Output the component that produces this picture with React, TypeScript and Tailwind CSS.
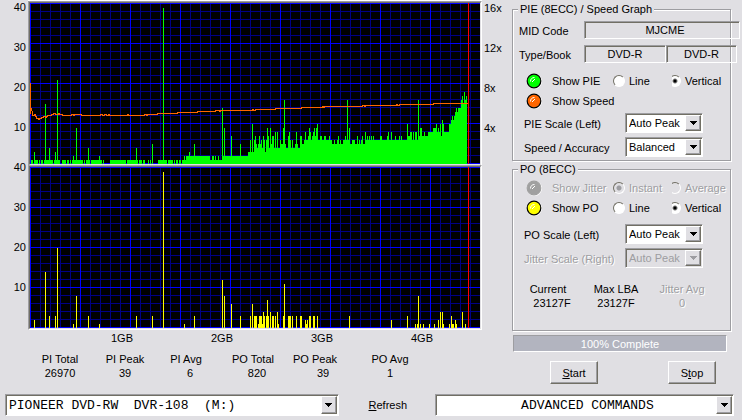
import type { ReactNode } from "react";

type Run = [start: number, end: number, value: number];
type Point = [x: number, y: number];

// [first column, last column, errors]
const pieBase: Run[] = [
  [1, 2, 1], [4, 7, 1], [9, 9, 1], [11, 12, 1], [14, 22, 1], [24, 29, 1], [32, 35, 1],
  [37, 38, 1], [40, 40, 1], [42, 52, 1], [54, 54, 1], [56, 59, 1], [61, 71, 1], [73, 73, 1],
  [80, 95, 1], [97, 107, 1], [109, 111, 1], [113, 114, 1], [118, 118, 1], [120, 120, 1],
  [122, 122, 1], [128, 136, 1], [138, 142, 1], [144, 144, 1], [146, 147, 1], [149, 150, 1],
  [152, 155, 1], [156, 179, 2], [180, 191, 1], [182, 183, 2], [185, 185, 2], [188, 188, 2],
  [192, 217, 2],
];

const piePeaks: Point[] = [
  [4, 3], [15, 15], [19, 4], [25, 3], [27, 21], [43, 2], [46, 9], [58, 4], [69, 2], [106, 4],
  [122, 5], [133, 39], [154, 2], [159, 3], [164, 5], [192, 14], [194, 9], [201, 7], [210, 5],
];

// one value for each column from 218 on
const pieTail = [
  3, 3, 6, 3, 10, 3, 6, 7, 5, 4, 5, 7, 5, 6, 4, 7, 6, 3, 6, 9, 7, 4, 9, 5, 7, 7, 4, 8, 4, 8, 4, 4,
  6, 5, 5, 9, 16, 5, 4, 4, 7, 8, 6, 4, 6, 4, 4, 5, 8, 5, 4, 4, 7, 7, 5, 5, 6, 8, 6, 6, 7, 9,
  8, 6, 7, 8, 9, 7, 9, 10, 6, 6, 7, 7, 6, 6, 7, 7, 6, 6, 6, 7, 6, 6, 5, 5, 6, 5, 5, 6, 7, 5,
  6, 5, 5, 6, 6, 7, 6, 16, 6, 9, 5, 5, 6, 6, 6, 5, 5, 7, 5, 6, 5, 6, 7, 5, 5, 8, 6, 7, 6, 7,
  6, 7, 6, 7, 6, 6, 6, 6, 6, 6, 7, 7, 6, 6, 6, 6, 6, 7, 8, 6, 6, 8, 6, 6, 6, 7, 6, 6, 6, 7,
  6, 7, 6, 6, 6, 6, 6, 10, 7, 7, 8, 8, 6, 8, 6, 8, 8, 6, 16, 7, 9, 9, 7, 7, 8, 7, 7, 7, 8, 8,
  8, 8, 8, 9, 9, 9, 10, 8, 9, 8, 10, 7, 11, 10, 8, 8, 8, 8, 8, 10, 10, 11, 12, 11, 12, 13, 14,
  13, 14, 14, 14, 16, 17, 15, 18, 16, 17,
];

const pieBars: Run[] = [
  ...pieBase,
  ...piePeaks.map(([x, value]): Run => [x, x, value]),
  ...pieTail.map((value, index): Run => [218 + index, 218 + index, value]),
];

const poBars: Run[] = [
  [4, 4, 2], [15, 15, 14], [19, 19, 3], [25, 25, 3], [27, 27, 20], [43, 43, 1], [46, 46, 8],
  [58, 58, 3], [69, 69, 1], [106, 106, 3], [122, 122, 3], [133, 133, 39], [154, 154, 1],
  [164, 164, 3], [192, 192, 12], [194, 194, 8], [201, 201, 6], [210, 210, 3], [220, 220, 3],
  [222, 222, 6], [224, 226, 3], [228, 228, 1], [229, 231, 3], [232, 232, 1], [233, 233, 4],
  [234, 234, 3], [236, 236, 3], [237, 237, 7], [238, 238, 3], [240, 240, 4], [242, 243, 3],
  [245, 245, 3], [247, 247, 4], [248, 248, 1], [253, 253, 3], [254, 254, 11], [258, 260, 3],
  [262, 262, 3], [266, 266, 3], [270, 271, 3], [275, 275, 2], [276, 276, 1], [277, 277, 2],
  [279, 280, 3], [283, 284, 3], [287, 287, 3], [319, 319, 3], [361, 361, 2], [377, 377, 3],
  [385, 385, 1], [387, 387, 1], [388, 388, 8], [390, 390, 1], [393, 393, 1], [399, 399, 1],
  [404, 404, 1], [408, 408, 2], [410, 410, 4], [412, 412, 4], [413, 413, 1], [419, 419, 1],
  [421, 421, 3], [422, 423, 1], [425, 425, 2], [426, 426, 1], [432, 432, 4], [435, 435, 1],
];

const speedLine =
  "M0 79V110M1 104V107M2 107V112H4V111H5V113H6V115H8V116H9V115H11V114H13V113H15V114H16V113H17V112H21V111H23V110H25V111H28V110H29V111H32V112H41V111H43V112H44V111H51V112H70V111H72V112H74V111H76V112H78V111H79V112H97V111H98V112H114V111H116V112H117V111H127V110H147V109H167V108H185V107H189V108H190V107H222V106H223V107H225V106H245V105H271V104H292V103H293V104H294V103H332V102H334V103H335V102H366V101H367V102H369V101H403V100H437";

const columns = Array.from({ length: 45 }, (_, index) => index * 10);
const rows = Array.from({ length: 21 }, (_, index) => index * 8);
const isMajor = (index: number) => index % 5 === 0;

function Grid() {
  return (
    <>
      {[false, true].map((major) => (
        <g key={String(major)} fill={major ? "#0000ff" : "#000084"}>
          {columns.map((x, index) =>
            isMajor(index) === major ? <rect key={`x${x}`} x={x} width="1" height="161" /> : null,
          )}
          {rows.map((y, index) =>
            isMajor(index) === major ? <rect key={`y${y}`} y={y} width="450" height="1" /> : null,
          )}
        </g>
      ))}
    </>
  );
}

function Graph({ label, bars, fill, children }: { label: string; bars: Run[]; fill: string; children?: ReactNode }) {
  return (
    <svg
      role="img"
      aria-label={label}
      viewBox="0 0 450 161"
      preserveAspectRatio="none"
      shapeRendering="crispEdges"
      className="block h-[161px] w-full bg-black"
    >
      <Grid />
      <g fill={fill}>
        {bars.map(([start, end, value]) => (
          <rect key={`${start}-${value}`} x={start} y={161 - value * 4} width={end - start + 1} height={value * 4} />
        ))}
      </g>
      {children}
      <rect x="438" width="1" height="161" fill="#ff0000" />
    </svg>
  );
}

function Led({ color, disabled }: { color: string; disabled?: boolean }) {
  return (
    <svg viewBox="0 0 16 16" className="size-4 shrink-0" aria-hidden="true">
      <circle cx="8.5" cy="8.5" r="7.5" fill="#ffffff" />
      <circle cx="8" cy="8" r="6.8" fill={color} stroke={disabled ? "#a0a0a0" : "#000000"} strokeWidth="1.2" />
      <path d="M4.5 8.5C4.5 6 6 4.5 8.5 4.5M6 9L9 6" fill="none" stroke="#ffffff" strokeWidth="1" />
    </svg>
  );
}

const disabledText = "text-[#9d9da1] [text-shadow:1px_1px_0_#ffffff]";

function Toggle({ color, disabled, children }: { color: string; disabled?: boolean; children: ReactNode }) {
  return (
    <button
      type="button"
      disabled={disabled}
      className={`flex items-center gap-[10px] whitespace-nowrap text-left ${disabled ? disabledText : ""}`}
    >
      <Led color={color} disabled={disabled} />
      {children}
    </button>
  );
}

function Radio({
  name,
  label,
  checked,
  disabled,
  clipped,
}: {
  name: string;
  label: string;
  checked?: boolean;
  disabled?: boolean;
  clipped?: boolean;
}) {
  return (
    <label className={`flex items-center gap-1 ${disabled ? disabledText : ""}`}>
      <span className={`flex justify-end overflow-hidden ${clipped ? "w-[9px]" : "w-3"}`}>
        <input
          type="radio"
          name={name}
          defaultChecked={checked}
          disabled={disabled}
          className="size-3 shrink-0 appearance-none rounded-full border border-t-[#716f64] border-r-white border-b-white border-l-[#716f64] bg-white checked:bg-[radial-gradient(circle,#000000_1px,#ffffff_3px)] disabled:bg-[#e0dfe3] disabled:checked:bg-[radial-gradient(circle,#9d9da1_2px,#e0dfe3_3px)]"
        />
      </span>
      {label}
    </label>
  );
}

function Arrow({ disabled }: { disabled?: boolean }) {
  return (
    <span className="pointer-events-none flex w-4 shrink-0 items-center justify-center border border-t-white border-r-[#716f64] border-b-[#716f64] border-l-white bg-[#e0dfe3] shadow-[inset_-1px_-1px_0_#9d9da1]">
      <svg viewBox="0 0 7 4" className="h-1 w-[7px]" shapeRendering="crispEdges" aria-hidden="true">
        <path d="M0 0H7V1H6V2H5V3H4V4H3V3H2V2H1V1H0Z" fill={disabled ? "#9d9da1" : "#000000"} />
      </svg>
    </span>
  );
}

const sunken =
  "border border-t-[#9d9da1] border-r-white border-b-white border-l-[#9d9da1] shadow-[inset_1px_1px_0_#716f64]";

function SelectRow({ id, label, value, disabled }: { id: string; label: string; value: string; disabled?: boolean }) {
  return (
    <div className="flex h-5 items-center justify-between pr-[27px] pl-[11px]">
      <label htmlFor={id} className={`whitespace-nowrap pt-px ${disabled ? disabledText : ""}`}>
        {label}
      </label>
      <div className={`flex h-5 w-[78px] p-px ${sunken} ${disabled ? "" : "bg-white"}`}>
        <select
          id={id}
          disabled={disabled}
          className="min-w-0 flex-1 appearance-none pl-[2px] leading-4 disabled:text-[#9d9da1] disabled:opacity-100"
        >
          <option>{value}</option>
        </select>
        <Arrow disabled={disabled} />
      </div>
    </div>
  );
}

function Group({ title, children }: { title: string; children: ReactNode }) {
  return (
    <fieldset className="min-w-0 border border-[#9d9da1] shadow-[1px_1px_0_#ffffff,inset_1px_1px_0_#ffffff]">
      <legend className="ml-[5px] bg-[#e0dfe3] px-[2px]">{title}</legend>
      {children}
    </fieldset>
  );
}

function Push({ children }: { children: ReactNode }) {
  return (
    <button
      type="button"
      className="h-[23px] w-12 border border-t-white border-r-[#716f64] border-b-[#716f64] border-l-white shadow-[inset_-1px_-1px_0_#9d9da1]"
    >
      {children}
    </button>
  );
}

const field = `flex h-[18px] shrink-0 items-center justify-center ${sunken}`;
const toggleRow = "grid h-5 grid-cols-[87px_59px_1fr] items-center pl-[13px]";

const totals = [
  { label: "PI Total", value: "26970", shift: "" },
  { label: "PI Peak", value: "39", shift: "" },
  { label: "PI Avg", value: "6", shift: "pl-2" },
  { label: "PO Total", value: "820", shift: "pl-2" },
  { label: "PO Peak", value: "39", shift: "pl-4" },
  { label: "PO Avg", value: "1", shift: "" },
];

export default function App() {
  return (
    <main className="min-h-screen bg-[#e0dfe3] font-['Liberation_Sans',Arial,sans-serif] text-[11px] leading-[14px] text-black">
      <div className="flex">
        <section className="min-w-0 flex-1">
          <div className="flex">
            <div className="w-7 shrink-0 pr-[2px] text-right">
              {[40, 30, 20, 10, 40, 30, 20, 10].map((value, index) => (
                <div key={index} className="h-10">
                  {value}
                </div>
              ))}
            </div>
            <div className="min-w-0 flex-1 border-t border-white">
              <div className="border border-t-[#9d9da1] border-r-white border-b-0 border-l-[#9d9da1]">
                <div className="border border-t-[#716f64] border-r-[#e0dfe3] border-b-[#e0dfe3] border-l-[#716f64]">
                  <Graph label="PIE and speed" bars={pieBars} fill="#00ff00">
                    <path d={speedLine} transform="translate(0.5 0.5)" fill="none" stroke="#ff6600" strokeWidth="1" />
                  </Graph>
                </div>
              </div>
              <div className="border border-t-[#9d9da1] border-r-white border-b-white border-l-[#9d9da1]">
                <div className="border border-t-[#716f64] border-r-[#e0dfe3] border-b-[#e0dfe3] border-l-[#716f64]">
                  <Graph label="PO" bars={poBars} fill="#ffff00" />
                </div>
              </div>
            </div>
            <div className="w-[30px] shrink-0 pt-px pl-[2px]">
              {["16x", "12x", "8x", "4x"].map((speed) => (
                <div key={speed} className="h-10">
                  {speed}
                </div>
              ))}
            </div>
          </div>

          <div className="mr-[30px] ml-7 grid grid-cols-[44fr_100fr_100fr_100fr_100fr_10fr] pt-px text-center">
            <span />
            {["1GB", "2GB", "3GB", "4GB"].map((size) => (
              <span key={size}>{size}</span>
            ))}
          </div>

          <dl className="mr-[30px] ml-7 grid grid-cols-[64fr_66fr_56fr_78fr_46fr_104fr_40fr] pt-[7px] text-center whitespace-nowrap">
            {totals.map((total) => (
              <div key={total.label}>
                <dt>{total.label}</dt>
                <dd className={total.shift}>{total.value}</dd>
              </div>
            ))}
          </dl>
        </section>

        <aside className="w-[230px] shrink-0 pt-[2px] pr-[11px]">
          <Group title="PIE (8ECC) / Speed Graph">
            <div className="flex pt-[5px] pl-[6px]">
              <span className="w-[65px] shrink-0 pt-[3px]">MID Code</span>
              <output className={`${field} w-[156px] pl-[6px]`}>MJCME</output>
            </div>
            <div className="flex pt-[6px] pl-[6px]">
              <span className="w-[65px] shrink-0 pt-[3px]">Type/Book</span>
              <output className={`${field} w-[82px]`}>DVD-R</output>
              <output className={`${field} w-[71px]`}>DVD-R</output>
            </div>
            <div className="pt-2">
              <div className={toggleRow}>
                <Toggle color="#00ff00">Show PIE</Toggle>
                <Radio name="pie" label="Line" />
                <Radio name="pie" label="Vertical" checked clipped />
              </div>
              <div className={toggleRow}>
                <Toggle color="#ff6600">Show Speed</Toggle>
              </div>
            </div>
            <div className="flex flex-col gap-1 pt-[2px] pb-[3px]">
              <SelectRow id="pie-scale" label="PIE Scale (Left)" value="Auto Peak" />
              <SelectRow id="accuracy" label="Speed / Accuracy" value="Balanced" />
            </div>
          </Group>

          <div className="pt-px">
            <Group title="PO (8ECC)">
              <div className="pt-[2px]">
                <div className={toggleRow}>
                  <Toggle color="#a0a0a0" disabled>
                    Show Jitter
                  </Toggle>
                  <Radio name="jitter" label="Instant" checked disabled />
                  <Radio name="jitter" label="Average" disabled clipped />
                </div>
                <div className={toggleRow}>
                  <Toggle color="#ffff00">Show PO</Toggle>
                  <Radio name="po" label="Line" />
                  <Radio name="po" label="Vertical" checked clipped />
                </div>
              </div>
              <div className="flex flex-col gap-1 pt-[6px]">
                <SelectRow id="po-scale" label="PO Scale (Left)" value="Auto Peak" />
                <SelectRow id="jitter-scale" label="Jitter Scale (Right)" value="Auto Peak" disabled />
              </div>
              <dl className="grid grid-cols-[70px_66px_66px] pt-[14px] pb-5 text-center">
                <div>
                  <dt>Current</dt>
                  <dd className="pl-2">23127F</dd>
                </div>
                <div>
                  <dt>Max LBA</dt>
                  <dd>23127F</dd>
                </div>
                <div className={disabledText}>
                  <dt>Jitter Avg</dt>
                  <dd>0</dd>
                </div>
              </dl>
            </Group>
          </div>

          <div
            role="progressbar"
            aria-valuenow={100}
            className="mt-1 mr-1 ml-px h-[17px] border border-t-[#9d9da1] border-r-white border-b-white border-l-[#9d9da1] bg-[#b2b4bf] text-center leading-4 text-white"
          >
            100% Complete
          </div>
          <div className="flex justify-between pt-[9px] pr-[15px] pl-[38px]">
            <Push>
              <u>S</u>tart
            </Push>
            <Push>
              S<u>t</u>op
            </Push>
          </div>
        </aside>
      </div>

      <footer className="flex h-8 items-end pr-2 pl-[5px]">
        <div className={`flex h-[22px] min-w-0 flex-[334] bg-white p-px ${sunken}`}>
          <select
            aria-label="Drive"
            className="min-w-0 flex-1 appearance-none pt-px pl-[2px] font-['Liberation_Mono','Courier_New',monospace] text-[13px] leading-4"
          >
            <option>{"PIONEER DVD-RW\u00a0 DVR-108\u00a0 (M:)"}</option>
          </select>
          <Arrow />
        </div>
        <button type="button" className="h-[22px] w-24 shrink-0 pl-[2px]">
          <u>R</u>efresh
        </button>
        <div className={`flex h-[22px] min-w-0 flex-[299] bg-white p-px ${sunken}`}>
          <select
            aria-label="Advanced commands"
            className="min-w-0 flex-1 appearance-none pt-px pl-[22px] text-center font-['Liberation_Mono','Courier_New',monospace] text-[13px] leading-4 [text-align-last:center]"
          >
            <option>ADVANCED COMMANDS</option>
          </select>
          <Arrow />
        </div>
      </footer>
    </main>
  );
}
